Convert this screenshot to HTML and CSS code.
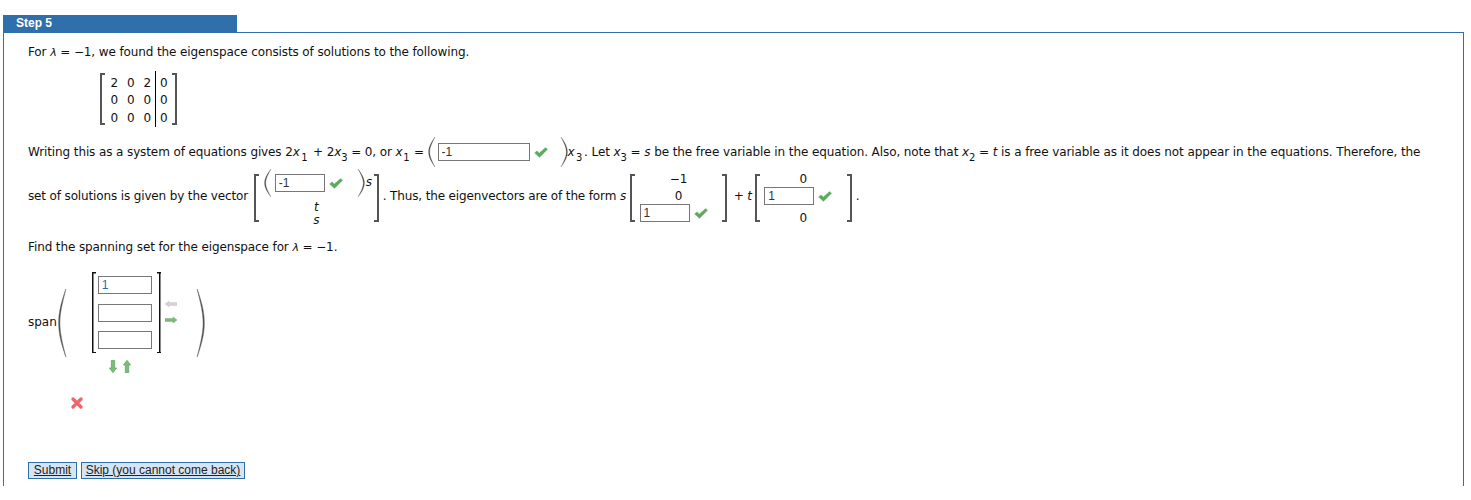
FILE: index.html
```html
<!DOCTYPE html>
<html lang="en">
<head>
<meta charset="utf-8">
<title>Step 5</title>
<link rel="stylesheet" href="styles.css">
</head>
<body>
<svg class="defs" width="0" height="0" aria-hidden="true">
  <defs>
    <symbol id="check" viewBox="0 0 14 11"><path d="M0.5 6 L3 3.8 L5.3 6 L11.5 0.5 L13.7 2.2 L5.5 10.5 Z" fill="#5cab5c" stroke="#7fbf7f" stroke-width=".4"/></symbol>
    <symbol id="lp" viewBox="0 0 8 30" preserveAspectRatio="none"><path d="M7 0 C2 7 0.6 11 0.6 15 C0.6 19 2 23 7 30 C3.4 23 1.7 19 1.7 15 C1.7 11 3.4 7 7 0 Z" fill="#444" stroke="#666" stroke-width=".3"/></symbol>
    <symbol id="rp" viewBox="0 0 8 30" preserveAspectRatio="none"><path d="M1 0 C6 7 7.4 11 7.4 15 C7.4 19 6 23 1 30 C4.6 23 6.3 19 6.3 15 C6.3 11 4.6 7 1 0 Z" fill="#444" stroke="#666" stroke-width=".3"/></symbol>
  </defs>
</svg>

<main class="step">
  <h2 class="tab">Step 5</h2>
  <section class="panel">
    <p class="line first">For <i class="lam">λ</i> = −1, we found the eigenspace consists of solutions to the following.</p>

    <div class="matrix-wrap">
      <div class="bmat aug">
        <span>2</span><span>0</span><span>2</span><span>0</span>
        <span>0</span><span>0</span><span>0</span><span>0</span>
        <span>0</span><span>0</span><span>0</span><span>0</span>
      </div>
    </div>

    <div class="line eq-one">
      <span class="t">Writing this as a system of equations gives 2<i>x</i></span><sub class="wider">1</sub><span class="t"> + 2<i>x</i></span><sub>3</sub><span class="t"> = 0, or <i>x</i></span><sub class="wide-1">1</sub><span class="t"> = </span>
      <svg class="paren p-l1"><use href="#lp"/></svg>
      <span class="answer wide"><input class="box" value="-1" aria-label="x1 coefficient"><svg class="ok"><use href="#check"/></svg></span>
      <svg class="paren p-r1"><use href="#rp"/></svg>
      <span class="t"><i>x</i></span><sub class="wider">3</sub><span class="t tight">. Let <i>x</i></span><sub>3</sub><span class="t tight"> = <i>s</i> be the free variable in the equation. Also, note that <i>x</i></span><sub>2</sub><span class="t tight"> = <i>t</i> is a free variable as it does not appear in the equations. Therefore, the</span>
    </div>

    <div class="line eq-two">
      <span class="t">set of solutions is given by the vector </span>
      <div class="bvec v-a">
        <div class="cell top-cell">
          <svg class="paren p-l2"><use href="#lp"/></svg>
          <span class="answer mid"><input class="box sm" value="-1" aria-label="vector first entry"><svg class="ok"><use href="#check"/></svg></span>
          <svg class="paren p-r2"><use href="#rp"/></svg><i class="sup-s">s</i>
        </div>
        <i class="cell">t</i>
        <i class="cell">s</i>
      </div>
      <span class="t">. Thus, the eigenvectors are of the form <i>s</i></span>
      <div class="bvec v-b">
        <span class="cell">−1</span>
        <span class="cell">0</span>
        <span class="answer"><input class="box sm" value="1" aria-label="s vector third entry"><svg class="ok"><use href="#check"/></svg></span>
      </div>
      <span class="t plus"> + <i>t</i></span>
      <div class="bvec v-c">
        <span class="cell">0</span>
        <span class="answer"><input class="box sm" value="1" aria-label="t vector second entry"><svg class="ok"><use href="#check"/></svg></span>
        <span class="cell">0</span>
      </div>
      <span class="t">.</span>
    </div>

    <p class="line find">Find the spanning set for the eigenspace for <i class="lam">λ</i> = −1.</p>

    <div class="span-row">
      <span class="span-label">span</span>
      <svg class="paren big-l"><use href="#lp"/></svg>
      <div class="span-mid">
        <div class="span-top">
          <div class="bcol">
            <input class="box col-box blue" value="1" aria-label="span entry 1">
            <input class="box col-box" aria-label="span entry 2">
            <input class="box col-box" aria-label="span entry 3">
          </div>
          <div class="h-arrows">
            <svg class="harrow" viewBox="0 0 12 6"><path d="M0 3 L4 0 V1.6 H12 V4.4 H4 V6 Z" fill="#d4d4d4" stroke="#c0c0c0" stroke-width=".4"/></svg>
            <svg class="harrow" viewBox="0 0 12 6"><path d="M12 3 L8 0 V1.6 H0 V4.4 H8 V6 Z" fill="#7dbb7d" stroke="#55a055" stroke-width=".4"/></svg>
          </div>
        </div>
        <div class="v-arrows">
          <svg class="varrow" viewBox="0 0 8 13"><path d="M4 12.7 L0.4 8 H2.3 V0.3 H5.7 V8 H7.6 Z" fill="#7dbb7d" stroke="#4f9a4f" stroke-width=".6"/></svg>
          <svg class="varrow" viewBox="0 0 8 13"><path d="M4 0.3 L0.4 5 H2.3 V12.7 H5.7 V5 H7.6 Z" fill="#7dbb7d" stroke="#4f9a4f" stroke-width=".6"/></svg>
        </div>
      </div>
      <svg class="paren big-r"><use href="#rp"/></svg>
    </div>

    <svg class="cross" viewBox="0 0 12 12" aria-label="incorrect"><path d="M2 2 L10 10 M10 2 L2 10" stroke="#f2626b" stroke-width="3.2" stroke-linecap="round"/></svg>

    <div class="actions">
      <button class="btn btn-submit" type="button">Submit</button>
      <button class="btn btn-skip" type="button">Skip (you cannot come back)</button>
    </div>
  </section>
</main>
</body>
</html>
```
FILE: styles.css
```css
* { box-sizing: border-box; }
html, body { margin: 0; background: #fff; }
body {
  height: 500px;
  overflow: hidden;
  padding: 15px 7px 0 3px;
  font: 12px/14px "DejaVu Sans", Verdana, sans-serif;
  color: #111;
}
.defs { position: absolute; }
.tab {
  margin: 0;
  width: 234px;
  height: 17px;
  padding: 1px 0 0 13px;
  background: #2f6fab;
  color: #fff;
  font: bold 12px/15px "Liberation Sans", Arial, sans-serif;
}
.panel {
  height: 454px;
  padding: 12px 24px 0;
  border: 1px solid #2f6fab;
  border-bottom: 0;
}
.line { margin: 0; white-space: nowrap; letter-spacing: -0.11px; }
.t { white-space: pre; }
.tight { letter-spacing: -0.09px; }
i { font-style: italic; }
.lam { font-size: 11px; }
sub { font-size: 10px; line-height: 10px; align-self: flex-end; }

.matrix-wrap { margin: 13px 0 0 72px; height: 56px; }
.bmat {
  position: relative;
  display: grid;
  grid-template-columns: repeat(4, 16.5px);
  grid-auto-rows: 17.5px;
  width: 77px;
  height: 52px;
  padding: 1.5px 6px 0;
  text-align: center;
  background:
    linear-gradient(#555,#555) 0 0/2px 100% no-repeat,
    linear-gradient(#555,#555) 0 0/5px 2px no-repeat,
    linear-gradient(#555,#555) 0 100%/5px 2px no-repeat,
    linear-gradient(#555,#555) 100% 0/2px 100% no-repeat,
    linear-gradient(#555,#555) 100% 0/5px 2px no-repeat,
    linear-gradient(#555,#555) 100% 100%/5px 2px no-repeat;
}
.bmat span { line-height: 17.5px; }
.bmat::after {
  content: "";
  position: absolute;
  left: 55px;
  top: -2px;
  bottom: -2px;
  width: 1px;
  background: #000;
}

.eq-one { display: flex; align-items: center; height: 30px; margin-top: 8px; }
.eq-one sub { margin: 0 0 4px 0; }
.eq-one sub.wider { margin: 0 1.8px 4px 1.5px; }
.eq-one sub.wide-1 { margin: 0 .6px 4px .8px; }
.paren { display: block; flex: none; overflow: visible; }
.p-l1 { width: 8px; height: 30px; margin-left: 0; margin-right: 2px; }
.p-r1 { width: 8px; height: 30px; margin-left: 0; margin-right: 0; }
.answer { display: flex; align-items: center; width: 78px; }
.answer.wide { width: 122px; }
.answer.mid { width: 82px; }
.box {
  display: block;
  width: 50px;
  height: 18px;
  padding: 0 3px;
  border: 1px solid #777;
  border-radius: 0;
  background: #fff;
  font: 12px "Liberation Sans", Arial, sans-serif;
  color: #333;
}
.wide .box { width: 92px; }
.ok { width: 14px; height: 11px; margin-left: 4px; flex: none; }

.eq-two { display: flex; align-items: center; height: 50px; margin-top: 4px; letter-spacing: -0.14px; }
.bvec {
  display: flex;
  flex-direction: column;
  align-items: center;
  flex: none;
  height: 48px;
  margin-top: 4px;
  padding: 0 10px;
  background:
    linear-gradient(#555,#555) 0 0/2px 100% no-repeat,
    linear-gradient(#555,#555) 0 0/5px 2px no-repeat,
    linear-gradient(#555,#555) 0 100%/5px 2px no-repeat,
    linear-gradient(#555,#555) 100% 0/2px 100% no-repeat,
    linear-gradient(#555,#555) 100% 0/5px 2px no-repeat,
    linear-gradient(#555,#555) 100% 100%/5px 2px no-repeat;
}
.cell { display: block; text-align: center; }
.v-a { width: 125px; margin-left: 2px; margin-right: 4px; }
.top-cell { display: flex; align-items: center; align-self: flex-start; height: 20px; margin: -1px 0 0 0; }
.v-a i.cell { line-height: 13px; }
.v-a i.cell:nth-child(2) { margin-top: 8px; }
.p-l2 { width: 8px; height: 28px; margin: 0 3px 0 0; }
.p-r2 { width: 8px; height: 28px; }
.sup-s { margin: -3px 0 0 1px; font-size: 12px; }
.v-b { width: 97px; margin-left: 4px; }
.v-b .cell:nth-child(1) { margin-top: -2px; line-height: 14px; }
.v-b .cell:nth-child(2) { margin-top: 3px; line-height: 14px; }
.v-b .answer { margin-top: 1px; }
.plus { margin-left: 3px; margin-right: 3px; }
.v-c { width: 97px; }
.v-c .cell:nth-child(1) { margin-top: -2px; line-height: 14px; }
.v-c .answer { margin-top: 1px; }
.v-c .cell:nth-child(3) { margin-top: 6px; line-height: 14px; }
.v-c + .t { margin-left: 4px; }

.find { margin-top: 19px; }

.span-row { display: flex; align-items: flex-start; margin-top: 17px; height: 106px; }
.span-label { margin: 43px 0 0; }
.big-l { width: 9px; height: 68px; margin: 17px 0 0 1px; }
.big-r { width: 9px; height: 68px; margin: 17px 0 0 0; }
.span-mid { width: 104px; margin-left: 25px; }
.span-top { display: flex; }
.bcol {
  display: flex;
  flex-direction: column;
  width: 69px;
  height: 81px;
  padding: 4px 8px 0 6px;
  background:
    linear-gradient(#111,#111) 0 0/1.5px 100% no-repeat,
    linear-gradient(#111,#111) 0 0/4px 1.5px no-repeat,
    linear-gradient(#111,#111) 0 100%/4px 1.5px no-repeat,
    linear-gradient(#111,#111) 100% 0/1.5px 100% no-repeat,
    linear-gradient(#111,#111) 100% 0/4px 1.5px no-repeat,
    linear-gradient(#111,#111) 100% 100%/4px 1.5px no-repeat;
}
.col-box { width: 54px; height: 18px; flex: none; margin-bottom: 10px; }
.col-box:nth-child(2) { margin-bottom: 9px; }
.blue { color: #1f6fb0; }
.h-arrows { display: flex; flex-direction: column; gap: 10px; margin: 29px 0 0 4px; }
.harrow { display: block; width: 12px; height: 6px; }
.v-arrows { display: flex; gap: 6px; margin: 7px 0 0 17px; }
.varrow { display: block; width: 8px; height: 13px; }

.cross { display: block; width: 12px; height: 12px; margin: 19px 0 0 43px; }
.actions { display: flex; gap: 4px; margin-top: 53px; }
.btn {
  height: 17px;
  border: 1px solid #2f6fab;
  border-radius: 0;
  background: #d7e4f1;
  color: #222;
  font: 12px/13px "Liberation Sans", Arial, sans-serif;
  text-decoration: underline;
  white-space: nowrap;
}
.btn-submit { width: 49px; padding: 0; }
.btn-skip { width: 164px; padding: 0; }
```
